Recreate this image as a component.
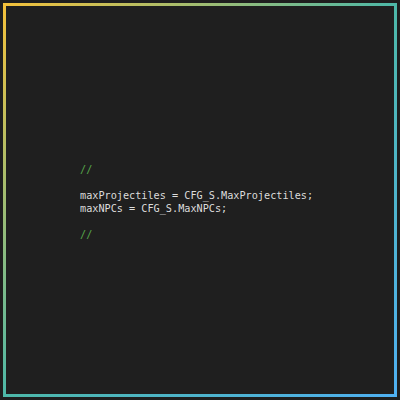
const lines: { text: string; comment?: boolean }[] = [
  { text: "//", comment: true },
  { text: "" },
  { text: "maxProjectiles = CFG_S.MaxProjectiles;" },
  { text: "maxNPCs = CFG_S.MaxNPCs;" },
  { text: "" },
  { text: "//", comment: true },
];

const App = () => {
  return (
    <div className="w-[400px] h-[400px] bg-[#1e1e1e] p-[3px]">
      {/* gradient frame */}
      <div className="w-full h-full p-[3px] bg-[linear-gradient(135deg,#f5c13a_0%,#4db8a8_50%,#4fb0f2_100%)]">
        <div className="w-full h-full bg-[#1f1f1f] pl-[74px] pt-[157px]">
          <pre className="font-['DejaVu_Sans_Mono',monospace] text-[10.2px] leading-[13px] text-[#dcdcdc]">
            {lines.map((l, i) => (
              <div key={i} className={l.comment ? "text-[#57a64a]" : ""}>
                {l.text || "\u00a0"}
              </div>
            ))}
          </pre>
        </div>
      </div>
    </div>
  );
};

export default App;
